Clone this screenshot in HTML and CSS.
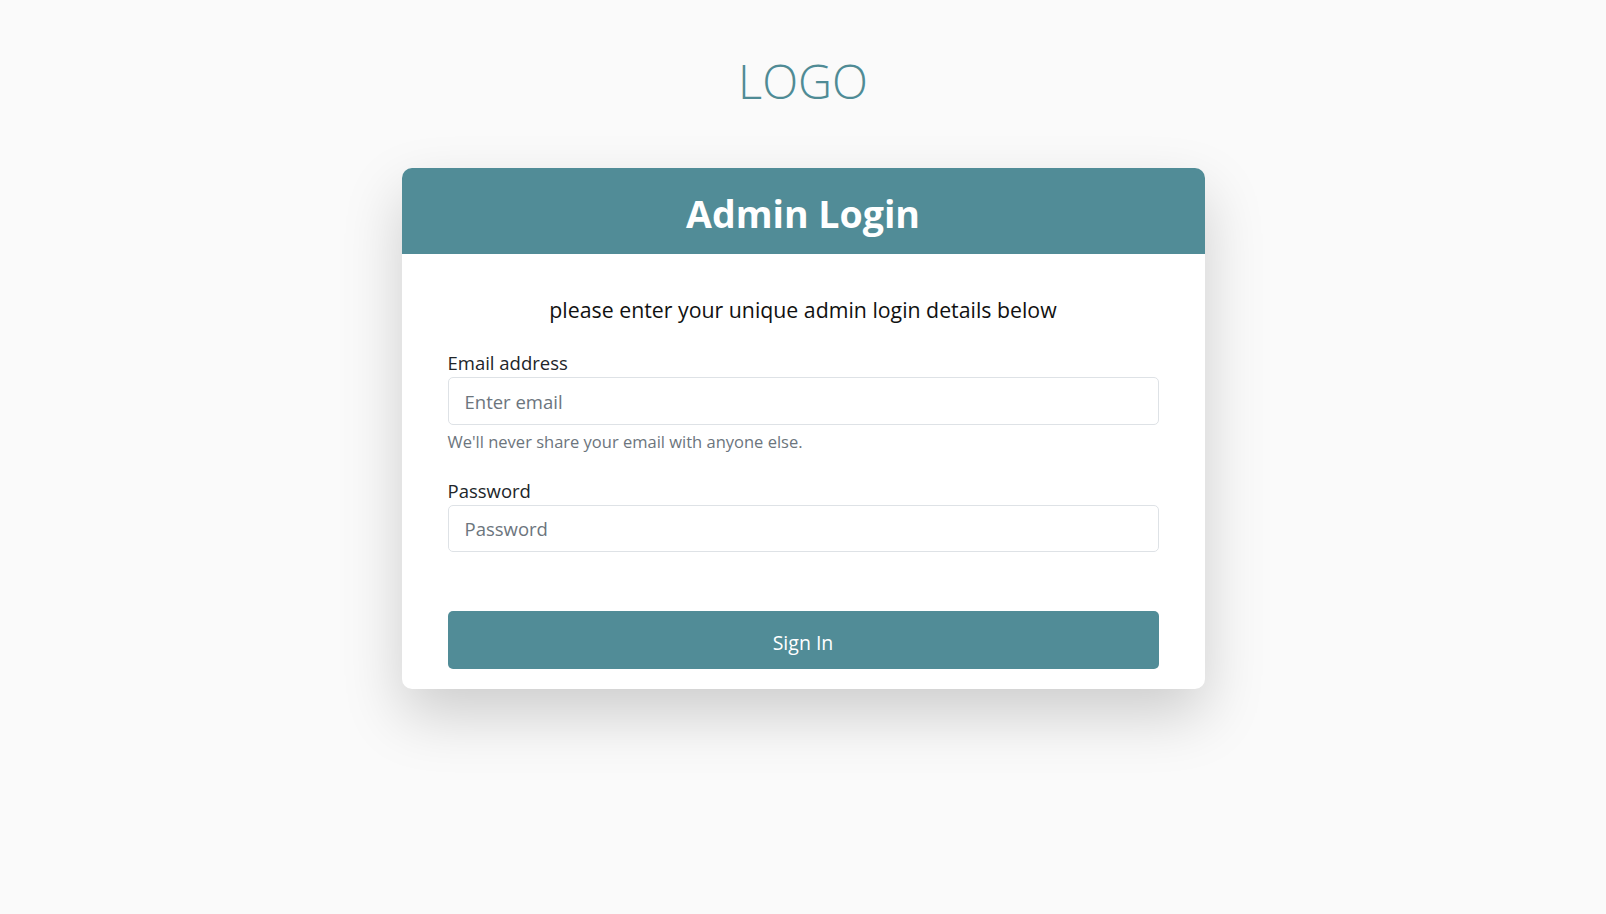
FILE: index.html
```html
<!DOCTYPE html>
<html lang="en">
<head>
<meta charset="utf-8">
<title>Admin Login</title>
<link rel="stylesheet" href="styles.css">
</head>
<body>
<div class="page">
  <div class="logo">LOGO</div>
  <div class="card">
    <div class="card-header">Admin Login</div>
    <form class="card-body">
      <p class="intro">please enter your unique admin login details below</p>
      <div class="field">
        <label class="label" for="email">Email address</label>
        <input class="input" id="email" type="email" placeholder="Enter email">
        <div class="help">We'll never share your email with anyone else.</div>
      </div>
      <div class="field field-pw">
        <label class="label" for="pw">Password</label>
        <input class="input" id="pw" type="password" placeholder="Password">
      </div>
      <button class="btn" type="button">Sign In</button>
    </form>
  </div>
</div>
</body>
</html>
```

FILE: styles.css
```css
* { box-sizing: border-box; }
html, body { margin: 0; padding: 0; }
body {
  background: #fafafa;
  font-family: "Open Sans", "Noto Sans", sans-serif;
  color: #212529;
}
.page {
  display: flex;
  flex-direction: column;
  align-items: center;
  min-height: 100vh;
  padding-top: 51px;
}
.logo {
  font-size: 47px;
  font-weight: 300;
  line-height: 60px;
  color: #4f8b95;
  margin-bottom: 57px;
}
.card {
  width: 803px;
  background: #fff;
  border-radius: 10px;
  box-shadow: 0 26px 60px rgba(0, 0, 0, 0.18);
  overflow: hidden;
}
.card-header {
  height: 86px;
  background: #518c97;
  color: #fff;
  font-size: 37.5px;
  font-weight: 700;
  line-height: 86px;
  text-align: center;
  padding-top: 3px;
}
.card-body {
  display: flex;
  flex-direction: column;
  padding: 41px 46px 20px;
  margin: 0;
}
.intro {
  margin: 0 0 27px;
  text-align: center;
  font-size: 21.3px;
  line-height: 30px;
  color: #111;
}
.field { display: flex; flex-direction: column; }
.label {
  font-size: 18.5px;
  line-height: 22px;
  margin-bottom: 3px;
}
.input {
  height: 48px;
  border: 1px solid #dee2e6;
  border-radius: 5px;
  padding: 0 16px;
  font-family: inherit;
  font-size: 18.5px;
  color: #212529;
  background: #fff;
  outline: none;
}
.input::placeholder { color: #6c757d; }
.help {
  margin-top: 6px;
  font-size: 16.5px;
  line-height: 22px;
  color: #6c757d;
}
.field-pw { margin-top: 27px; }
.field-pw .input { height: 47px; }
.btn {
  margin-top: 59px;
  height: 58px;
  padding: 4px 0 0;
  border: none;
  border-radius: 5px;
  background: #518c97;
  color: #fff;
  font-family: inherit;
  font-size: 19.5px;
}
```
